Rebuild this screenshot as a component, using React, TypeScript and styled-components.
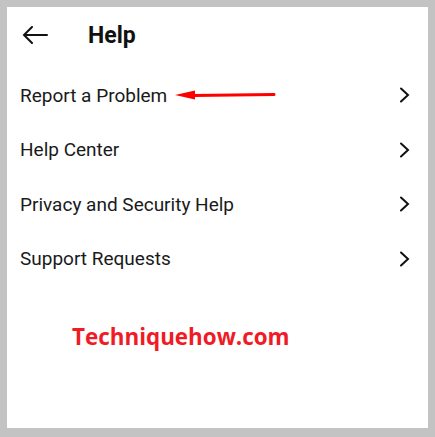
import styled, { createGlobalStyle } from 'styled-components';

const Global = createGlobalStyle`
  html, body {
    margin: 0;
    padding: 0;
    background: #c3c3c3;
  }
  body {
    font-family: Roboto, "Noto Sans", sans-serif;
  }
`;

const Frame = styled.div`
  padding: 7px;
  width: 435px;
  height: 437px;
  box-sizing: border-box;
`;

const Panel = styled.div`
  width: 421px;
  height: 421px;
  background: #fff;
  display: flex;
  flex-direction: column;
`;

const Header = styled.header`
  height: 56px;
  display: flex;
  align-items: center;
  padding-left: 15px;
  h1 {
    margin: 0 0 0 40px;
    font-size: 23px;
    font-weight: 700;
    color: #111;
  }
`;

const List = styled.ul`
  list-style: none;
  margin: 5px 0 0;
  padding: 0;
`;

const Row = styled.li`
  height: 54.5px;
  display: flex;
  align-items: center;
  padding: 0 18px 0 13px;
  font-size: 19px;
  color: #1a1a1a;
  span {
    flex: 1;
    display: flex;
    align-items: center;
  }
`;

const Pointer = styled.svg`
  margin-left: 8px;
`;

const Watermark = styled.div`
  margin: 35px 0 0 65px;
  font-family: "Open Sans", sans-serif;
  font-weight: 700;
  font-size: 22.4px;
  color: #f01b25;
`;

const Back = () => (
  <svg width="26" height="18" viewBox="0 0 26 18" fill="none" stroke="#111" strokeWidth="2" strokeLinecap="round">
    <path d="M2 9h23M10 1L2 9l8 8" />
  </svg>
);

const Chevron = () => (
  <svg width="11" height="16" viewBox="0 0 11 16" fill="none" stroke="#111" strokeWidth="2" strokeLinecap="round">
    <path d="M2 1.5l7 6.5-7 6.5" />
  </svg>
);

const items = ['Report a Problem', 'Help Center', 'Privacy and Security Help', 'Support Requests'];

export default function App() {
  return (
    <Frame>
      <Global />
      <Panel>
        <Header>
          <Back />
          <h1>Help</h1>
        </Header>
        <List>
          {items.map((t, i) => (
            <Row key={t}>
              <span>
                {t}
                {i === 0 && (
                  <Pointer width="102" height="12" viewBox="0 0 102 12">
                    <path d="M18 6.5L99 5.5" stroke="#f00" strokeWidth="3" strokeLinecap="round" />
                    <path d="M0 6L20 1.5L20 10.5Z" fill="#f00" />
                  </Pointer>
                )}
              </span>
              <Chevron />
            </Row>
          ))}
        </List>
        <Watermark>Techniquehow.com</Watermark>
      </Panel>
    </Frame>
  );
}
